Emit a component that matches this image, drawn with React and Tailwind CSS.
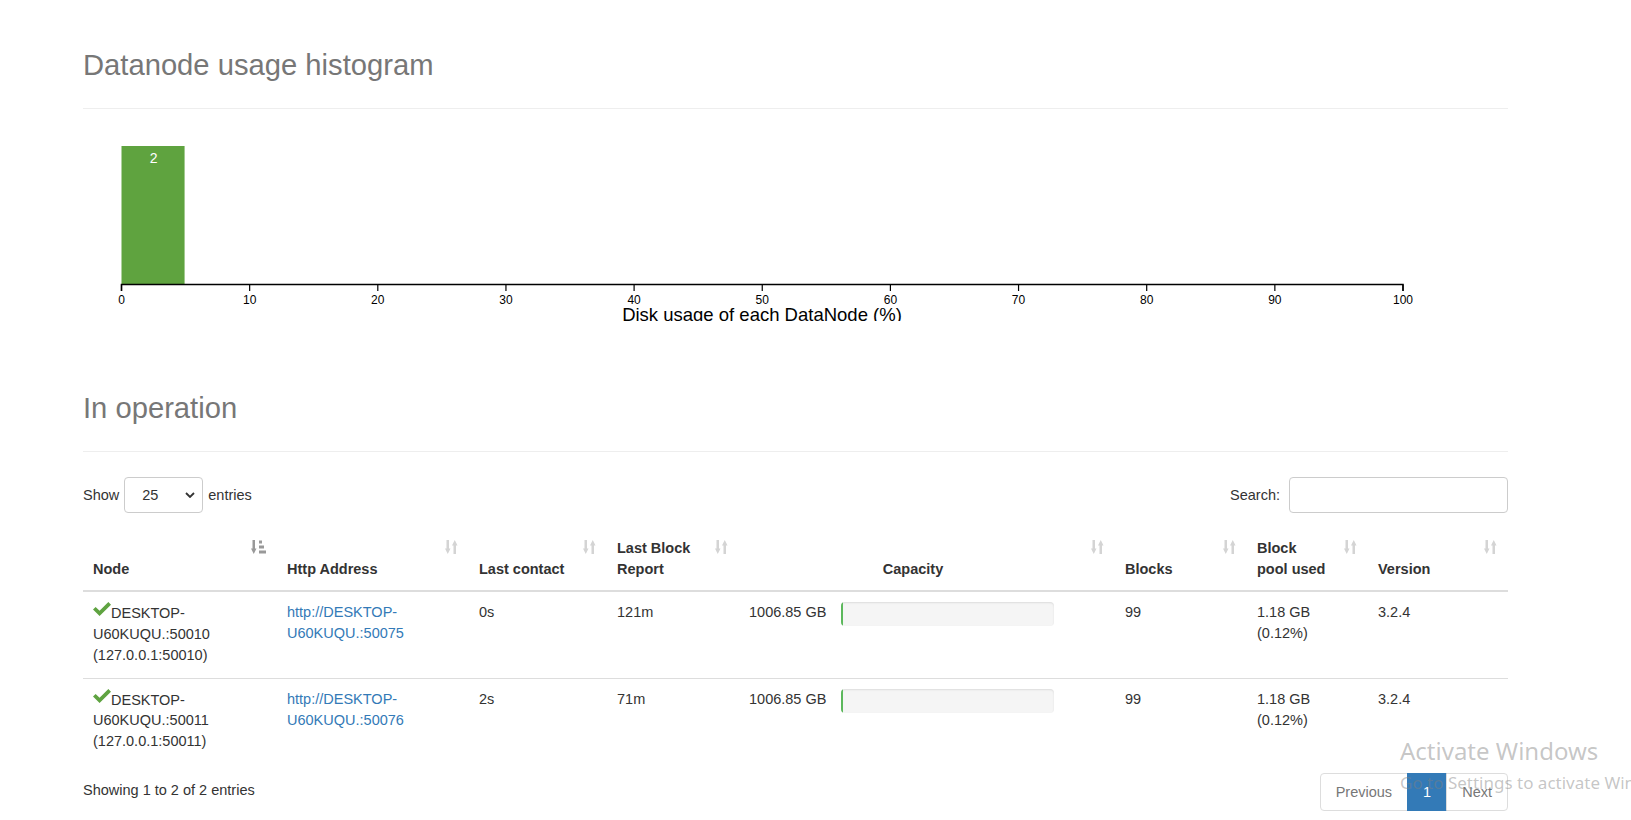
import React from "react";

const SortBoth = () => (
  <svg width="13" height="14" viewBox="0 0 13 14" className="block">
    <rect x="1.5" y="0" width="2.5" height="9" fill="#d4d4d4" />
    <polygon points="0,8.5 5.5,8.5 2.75,14" fill="#d4d4d4" />
    <polygon points="7,5.5 12.5,5.5 9.75,0" fill="#d4d4d4" />
    <rect x="8.5" y="5" width="2.5" height="9" fill="#d4d4d4" />
  </svg>
);

const SortAsc = () => (
  <svg width="15" height="14" viewBox="0 0 15 14" className="block">
    <rect x="1.5" y="0" width="2.5" height="9" fill="#999" />
    <polygon points="0,8.5 5.5,8.5 2.75,14" fill="#999" />
    <rect x="8" y="0.5" width="3" height="3" fill="#999" />
    <rect x="8" y="5.5" width="5" height="3" fill="#999" />
    <rect x="8" y="10.5" width="7" height="3" fill="#999" />
  </svg>
);

const Check = () => (
  <svg width="18" height="14" viewBox="0 0 17 13" className="inline-block align-[1.5px]">
    <polygon points="0,7 2.5,4.5 6.2,8.2 14.5,0 17,2.5 6.2,13" fill="#5fa341" />
  </svg>
);

const Histogram = () => {
  const x0 = 38.5;
  const k = 12.815;
  const ticks = [0, 10, 20, 30, 40, 50, 60, 70, 80, 90, 100];
  return (
    <svg width="1425" height="212" className="block">
      <rect x={x0} y="37" width={5 * k - 1} height="138" fill="#5fa33f" />
      <text x={x0 + (5 * k) / 2} y="54.3" fill="#fff" fontSize="14" textAnchor="middle" fontFamily="Liberation Sans, Arial, sans-serif">2</text>
      <path d={`M${x0},182 V175.5 H${x0 + 100 * k} V182`} fill="none" stroke="#000" strokeWidth="1.5" />
      {ticks.map((t) => (
        <g key={t}>
          <line x1={x0 + t * k} x2={x0 + t * k} y1="175.5" y2="182" stroke="#000" strokeWidth="1.2" />
          <text x={x0 + t * k} y="194.5" fontSize="12" textAnchor="middle" fill="#000" fontFamily="Liberation Sans, Arial, sans-serif">{t}</text>
        </g>
      ))}
      <text x={679} y="211.5" fontSize="18.5" textAnchor="middle" fill="#000" fontFamily="Liberation Sans, Arial, sans-serif">Disk usage of each DataNode (%)</text>
    </svg>
  );
};

const Th = ({ children, icon, className = "" }) => (
  <th className={`relative align-bottom font-bold pl-[10px] pt-[10px] pb-[10px] border-b-2 border-[#ddd] whitespace-nowrap ${className}`}>
    {children}
    <span className="absolute top-[12px] right-[11px]">{icon}</span>
  </th>
);

const rows = [
  { port: "50010", http: "50075", contact: "0s", report: "121m" },
  { port: "50011", http: "50076", contact: "2s", report: "71m" },
];

export default function App() {
  return (
    <div className="relative w-[1631px] h-[820px] overflow-hidden bg-white text-[#333] text-[14.5px] leading-[21px] font-['Liberation_Sans',Arial,sans-serif]">
      <div className="ml-[83px] w-[1425px]">
        <div className="pt-[48px] pb-[26px] border-b border-[#eee]">
          <h1 className="text-[29.2px] leading-[34px] font-normal text-[#777]">Datanode usage histogram</h1>
        </div>
        <Histogram />
        <div className="mt-[70px] pb-[26px] border-b border-[#eee]">
          <h1 className="text-[29.2px] leading-[34px] font-normal text-[#777]">In operation</h1>
        </div>

        <div className="mt-[25px] h-[36px] flex items-center justify-between">
          <div className="flex items-center">
            <span>Show</span>
            <div className="ml-[5px] mr-[5px] w-[79px] h-[36px] border border-[#ccc] rounded-[4px] flex items-center justify-between pl-[17px] pr-[7px]">
              <span>25</span>
              <svg width="10" height="6" viewBox="0 0 10 6">
                <path d="M1,1 L5,5 L9,1" fill="none" stroke="#333" strokeWidth="1.8" />
              </svg>
            </div>
            <span>entries</span>
          </div>
          <div className="flex items-center">
            <span>Search:</span>
            <div className="ml-[9px] w-[219px] h-[36px] border border-[#ccc] rounded-[4px]" />
          </div>
        </div>

        <table className="mt-[15px] w-[1425px] table-fixed border-collapse text-left">
          <colgroup>
            <col className="w-[194px]" />
            <col className="w-[192px]" />
            <col className="w-[138px]" />
            <col className="w-[132px]" />
            <col className="w-[376px]" />
            <col className="w-[132px]" />
            <col className="w-[121px]" />
            <col className="w-[140px]" />
          </colgroup>
          <thead>
            <tr>
              <Th icon={<SortAsc />}>Node</Th>
              <Th icon={<SortBoth />}>Http Address</Th>
              <Th icon={<SortBoth />}>Last contact</Th>
              <Th icon={<SortBoth />}>Last Block<br />Report</Th>
              <Th icon={<SortBoth />} className="text-center pr-[38px]">Capacity</Th>
              <Th icon={<SortBoth />}>Blocks</Th>
              <Th icon={<SortBoth />}>Block<br />pool used</Th>
              <Th icon={<SortBoth />}>Version</Th>
            </tr>
          </thead>
          <tbody>
            {rows.map((r, i) => {
              const td = `align-top pl-[10px] pt-[10px] pb-[12px] whitespace-nowrap ${i > 0 ? "border-t border-[#ddd]" : ""}`;
              return (
                <tr key={r.port}>
                  <td className={td}>
                    <Check />DESKTOP-<br />U60KUQU.:{r.port}<br />(127.0.0.1:{r.port})
                  </td>
                  <td className={td}>
                    <a className="text-[#337ab7]">http://DESKTOP-<br />U60KUQU.:{r.http}</a>
                  </td>
                  <td className={td}>{r.contact}</td>
                  <td className={td}>{r.report}</td>
                  <td className={td}>
                    <div className="flex items-start">
                      <span className="inline-block w-[92px]">1006.85 GB</span>
                      <div className="w-[213px] h-[24px] rounded-[4px] bg-[#f5f5f5] shadow-[inset_0_1px_2px_rgba(0,0,0,0.1)] overflow-hidden">
                        <div className="w-[2px] h-full bg-[#5cb85c]" />
                      </div>
                    </div>
                  </td>
                  <td className={td}>99</td>
                  <td className={td}>1.18 GB<br />(0.12%)</td>
                  <td className={td}>3.2.4</td>
                </tr>
              );
            })}
          </tbody>
        </table>

        <div className="mt-[9px] flex items-start justify-between">
          <div className="pt-[7px]">Showing 1 to 2 of 2 entries</div>
          <div className="flex">
            <span className="px-[15px] py-[7.5px] border border-[#ddd] rounded-l-[4px] text-[#777]">Previous</span>
            <span className="-ml-px px-[15px] py-[7.5px] border border-[#337ab7] bg-[#337ab7] text-white">1</span>
            <span className="-ml-px px-[15px] py-[7.5px] border border-[#ddd] rounded-r-[4px] text-[#777]">Next</span>
          </div>
        </div>
      </div>

      <div className="absolute left-[1400px] top-[739px] text-[24px] leading-none whitespace-nowrap text-[rgba(128,128,128,0.45)] font-['Noto_Sans',sans-serif]">Activate Windows</div>
      <div className="absolute left-[1400px] top-[774px] text-[17px] leading-none whitespace-nowrap text-[rgba(128,128,128,0.45)] font-['Noto_Sans',sans-serif]">Go to Settings to activate Windows.</div>
    </div>
  );
}
